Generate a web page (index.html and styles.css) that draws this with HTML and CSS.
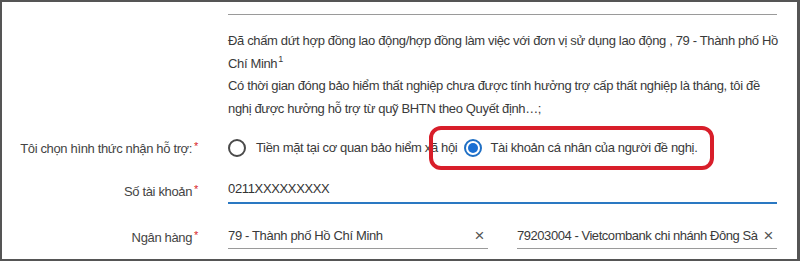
FILE: index.html
```html
<!DOCTYPE html>
<html lang="vi">
<head>
<meta charset="utf-8">
<title>Hình thức nhận hỗ trợ</title>
<link rel="stylesheet" href="styles.css">
</head>
<body>
<div class="frame">
  <div class="row row-info">
    <div class="label"></div>
    <div class="info">
      <p>Đã chấm dứt hợp đồng lao động/hợp đồng làm việc với đơn vị sử dụng lao động , 79 - Thành phố Hồ Chí Minh<sup>1</sup></p>
      <p>Có thời gian đóng bảo hiểm thất nghiệp chưa được tính hưởng trợ cấp thất nghiệp là tháng, tôi đề nghị được hưởng hỗ trợ từ quỹ BHTN theo Quyết định…;</p>
    </div>
  </div>
  <div class="row row-radio">
    <div class="label">Tôi chọn hình thức nhận hỗ trợ:<span class="req">*</span></div>
    <div class="radios">
      <label class="option"><span class="radio"></span><span>Tiền mặt tại cơ quan bảo hiểm xã hội</span></label>
      <label class="option option-hl"><span class="radio radio-on"></span><span>Tài khoản cá nhân của người đề nghị.</span><span class="highlight"></span></label>
    </div>
  </div>
  <div class="row row-account">
    <div class="label">Số tài khoản<span class="req">*</span></div>
    <div class="field field-active">0211XXXXXXXXX</div>
  </div>
  <div class="row row-bank">
    <div class="label">Ngân hàng<span class="req">*</span></div>
    <div class="selects">
      <div class="field field-select"><span class="val">79 - Thành phố Hồ Chí Minh</span><span class="clear">×</span></div>
      <div class="field field-select"><span class="val tight">79203004 - Vietcombank chi nhánh Đông Sà</span><span class="clear">×</span></div>
    </div>
  </div>
</div>
</body>
</html>
```

FILE: styles.css
```css
* { box-sizing: border-box; }
html, body { margin: 0; padding: 0; background: #fff; }
body {
  font-family: "Liberation Sans", Arial, sans-serif;
  font-size: 13px;
  letter-spacing: -0.35px;
  color: #3a3a3a;
}
.frame {
  width: 800px;
  height: 261px;
  border: 2px solid #555;
  border-right-width: 3px;
  padding-top: 12px;
  overflow: hidden;
}
.row {
  display: grid;
  grid-template-columns: 226px 549px;
}
.label {
  text-align: right;
  padding-right: 30px;
  color: #444;
  line-height: 22px;
  white-space: nowrap;
}
.req {
  color: #d9262b;
  font-size: 11px;
  vertical-align: 3px;
  margin-left: 2px;
}
.info {
  border-top: 1px solid #9a9a9a;
  padding-top: 15px;
}
.info p {
  margin: 0 -6px 0 0;
  line-height: 22.5px;
}
.info sup {
  font-size: 9px;
  line-height: 0;
  margin-left: 1px;
}
.row-radio {
  height: 58px;
  padding-bottom: 3px;
  align-items: center;
}
.radios {
  display: flex;
  align-items: center;
}
.option {
  display: flex;
  align-items: center;
  gap: 10px;
  line-height: 22px;
  white-space: nowrap;
}
.option + .option { margin-left: 7px; gap: 8px; }
.option-hl { position: relative; }
.radio {
  width: 18px;
  height: 18px;
  border: 2px solid #4a4a4a;
  border-radius: 50%;
  flex: none;
  display: flex;
  align-items: center;
  justify-content: center;
}
.radio-on { border-color: #1f6fc4; }
.radio-on::after {
  content: "";
  width: 10px;
  height: 10px;
  border-radius: 50%;
  background: #1a6fd3;
}
.highlight {
  position: absolute;
  left: -35px;
  top: -11px;
  width: 285px;
  height: 44px;
  border: 4px solid #d81e2a;
  border-radius: 12px;
}
.field {
  line-height: 22px;
  white-space: nowrap;
  overflow: hidden;
}
.field-active {
  border-bottom: 2px solid #2a78c2;
  padding-bottom: 2px;
  color: #333;
}
.row-bank { margin-top: 20px; }
.selects {
  display: grid;
  grid-template-columns: 260px 260px;
  column-gap: 29px;
}
.field-select {
  display: flex;
  justify-content: space-between;
  align-items: center;
  border-bottom: 1px solid #9a9a9a;
  padding-bottom: 1px;
}
.field-select .val { overflow: hidden; }
.field-select .tight { letter-spacing: -0.45px; }
.clear {
  color: #555;
  font-size: 17px;
  padding: 0 4px 0 4px;
}
```
